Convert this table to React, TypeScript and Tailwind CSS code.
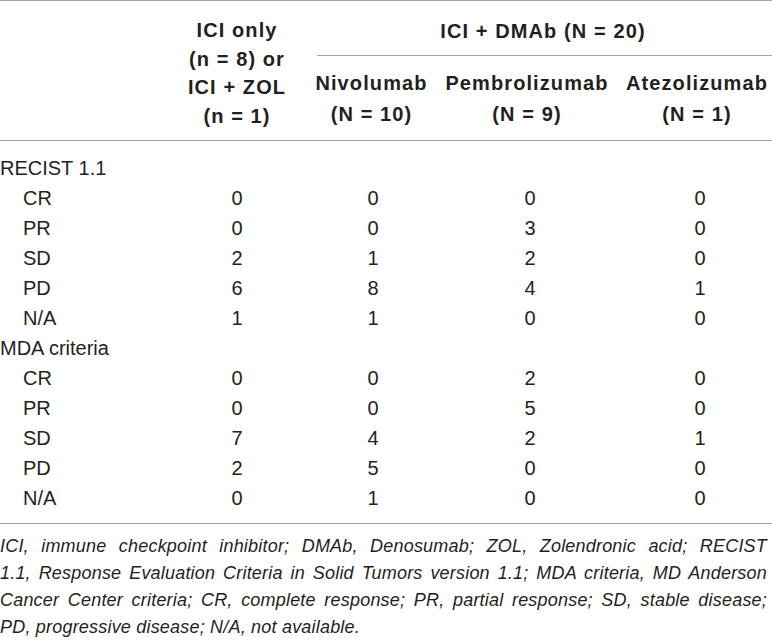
import React from "react";

const rows: { label: string; vals?: string[]; group?: boolean }[] = [
  { label: "RECIST 1.1", group: true },
  { label: "CR", vals: ["0", "0", "0", "0"] },
  { label: "PR", vals: ["0", "0", "3", "0"] },
  { label: "SD", vals: ["2", "1", "2", "0"] },
  { label: "PD", vals: ["6", "8", "4", "1"] },
  { label: "N/A", vals: ["1", "1", "0", "0"] },
  { label: "MDA criteria", group: true },
  { label: "CR", vals: ["0", "0", "2", "0"] },
  { label: "PR", vals: ["0", "0", "5", "0"] },
  { label: "SD", vals: ["7", "4", "2", "1"] },
  { label: "PD", vals: ["2", "5", "0", "0"] },
  { label: "N/A", vals: ["0", "1", "0", "0"] },
];

const footLines = [
  "ICI, immune checkpoint inhibitor; DMAb, Denosumab; ZOL, Zolendronic acid; RECIST",
  "1.1, Response Evaluation Criteria in Solid Tumors version 1.1; MDA criteria, MD Anderson",
  "Cancer Center criteria; CR, complete response; PR, partial response; SD, stable disease;",
];

export default function App() {
  return (
    <div className="w-[772px] h-[642px] bg-white text-[#231f20] font-['Liberation_Sans',Arial,sans-serif] overflow-hidden">
      {/* Header */}
      <div className="border-t border-b border-[#a3a3a3] h-[141px] grid grid-cols-[160px_154px_458px] font-bold text-[20px] tracking-[1.1px]">
        <div />
        <div className="pt-[15px] leading-[28.7px] text-center whitespace-nowrap">
          <div>ICI only</div>
          <div>(n = 8) or</div>
          <div>ICI + ZOL</div>
          <div>(n = 1)</div>
        </div>
        <div className="flex flex-col">
          <div className="h-[54px] pt-[15px] leading-[30px] text-center whitespace-nowrap">
            ICI + DMAb (N = 20)
          </div>
          <div className="ml-[3px] border-t border-[#a3a3a3]" />
          <div className="grid grid-cols-[115px_196px_144px] pt-[12px] leading-[30.5px] text-center whitespace-nowrap">
            <div>
              <div>Nivolumab</div>
              <div>(N = 10)</div>
            </div>
            <div>
              <div>Pembrolizumab</div>
              <div>(N = 9)</div>
            </div>
            <div>
              <div>Atezolizumab</div>
              <div>(N = 1)</div>
            </div>
          </div>
        </div>
      </div>

      {/* Body */}
      <div className="border-b border-[#a3a3a3] pt-[12px] pb-[10px] text-[20px]">
        {rows.map((r, i) => (
          <div
            key={i}
            className="grid grid-cols-[160px_154px_118px_196px_144px] h-[30px] leading-[30px]"
          >
            <div className={r.group ? "pl-0 whitespace-nowrap" : "pl-[23px] whitespace-nowrap"}>
              {r.label}
            </div>
            {r.vals ? (
              r.vals.map((v, j) => (
                <div key={j} className="text-center">
                  {v}
                </div>
              ))
            ) : (
              <>
                <div />
                <div />
                <div />
                <div />
              </>
            )}
          </div>
        ))}
      </div>

      {/* Footnote */}
      <div className="pt-[9px] pr-[5px] italic text-[18px] leading-[27px] tracking-[0.2px]">
        {footLines.map((l, i) => (
          <div key={i} className="whitespace-nowrap text-justify [text-align-last:justify]">
            {l}
          </div>
        ))}
        <div className="whitespace-nowrap">PD, progressive disease; N/A, not available.</div>
      </div>
    </div>
  );
}
